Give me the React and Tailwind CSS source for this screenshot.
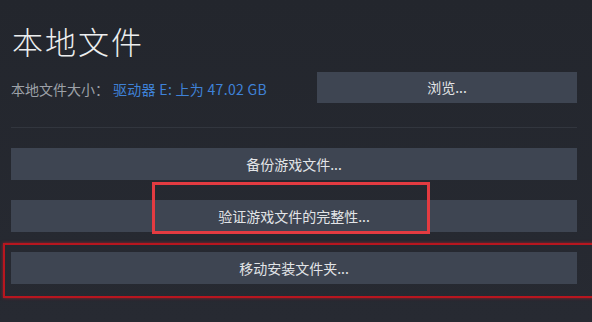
const font = { fontFamily: '"Noto Sans CJK SC", "Noto Sans", sans-serif' };

const ActionButton = ({ children, className = '' }) => (
  <button
    className={`h-[32px] w-full bg-[#3e4552] text-[14px] text-[#e2e4e7] flex items-center justify-center ${className}`}
  >
    {children}
  </button>
);

export default function App() {
  return (
    <div
      className="relative w-[592px] h-[322px] overflow-hidden bg-gradient-to-b from-[#23262d] to-[#272a32] pl-[11px] pr-[15px] pt-[23px]"
      style={font}
    >
      <h1 className="ml-[1px] text-[31px] leading-[36px] tracking-[2px] text-[#eceeef] font-light">本地文件</h1>

      <div className="mt-[13px] flex items-center justify-between">
        <div className="text-[14px] leading-[16px] pt-[2px]">
          <span className="text-[#9da1a8]">本地文件大小：</span>
          <span className="ml-[4px] text-[#3f82d8] tracking-[0.3px]">驱动器 E: 上为 47.02 GB</span>
        </div>
        <ActionButton className="!w-[260px] !h-[31px]">浏览...</ActionButton>
      </div>

      <div className="mt-[24px] h-px bg-[#32363e]" />

      <div className="mt-[20px] flex flex-col gap-[20px]">
        <ActionButton>备份游戏文件...</ActionButton>
        <ActionButton>验证游戏文件的完整性...</ActionButton>
        <ActionButton>移动安装文件夹...</ActionButton>
      </div>

      {/* annotation boxes */}
      <div className="absolute left-[152px] top-[182px] w-[278px] h-[52px] border-[3px] border-[#e33b41]" />
      <div className="absolute left-[3px] top-[243px] w-[620px] h-[55px] border-2 border-[#b8161f] shadow-[0_0_3px_rgba(220,30,40,0.6)]" />
    </div>
  );
}
